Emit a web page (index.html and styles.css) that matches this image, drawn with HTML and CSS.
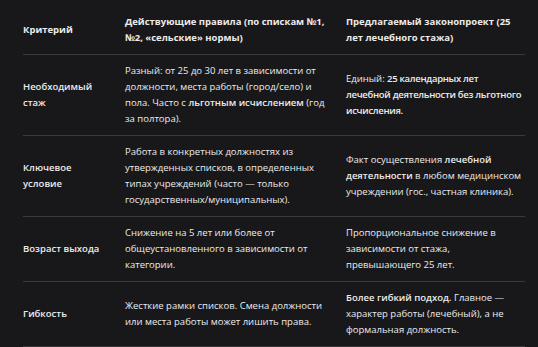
FILE: index.html
```html
<!DOCTYPE html>
<html lang="ru">
<head>
<meta charset="utf-8">
<link rel="stylesheet" href="styles.css">
</head>
<body>
<table class="cmp">
  <colgroup>
    <col class="c1"><col class="c2"><col class="c3">
  </colgroup>
  <thead>
    <tr>
      <th>Критерий</th>
      <th>Действующие правила (по спискам №1, №2, «сельские» нормы)</th>
      <th>Предлагаемый законопроект (25 лет лечебного стажа)</th>
    </tr>
  </thead>
  <tbody>
    <tr>
      <td class="crit">Необходимый стаж</td>
      <td>Разный: от 25 до 30 лет в зависимости от должности, места работы (город/село) и пола. Часто с <b>льготным исчислением</b> (год за полтора).</td>
      <td>Единый: <b class="tight">25 календарных лет<br>лечебной деятельности без льготного исчисления.</b></td>
    </tr>
    <tr>
      <td class="crit">Ключевое условие</td>
      <td>Работа в конкретных должностях из утвержденных списков, в определенных типах учреждений (часто — только государственных/муниципальных).</td>
      <td>Факт осуществления <b>лечебной деятельности</b> в любом медицинском учреждении (гос., частная клиника).</td>
    </tr>
    <tr>
      <td class="crit">Возраст выхода</td>
      <td>Снижение на 5 лет или более от общеустановленного в зависимости от категории.</td>
      <td>Пропорциональное снижение в зависимости от стажа, превышающего 25 лет.</td>
    </tr>
    <tr>
      <td class="crit">Гибкость</td>
      <td>Жесткие рамки списков. Смена должности или места работы может лишить права.</td>
      <td><b>Более гибкий подход.</b> Главное — характер работы (лечебный), а не формальная должность.</td>
    </tr>
  </tbody>
</table>
</body>
</html>
```

FILE: styles.css
```css
html, body {
  margin: 0;
  background: #18181b;
}
body {
  padding: 6px 12px 0 23px;
  font-family: "Open Sans", "Noto Sans", sans-serif;
  font-size: 9.5px;
  line-height: 16px;
  color: #ececec;
}
.cmp {
  width: 502px;
  border-collapse: collapse;
  table-layout: fixed;
}
.c1 { width: 102px; }
.c2 { width: 221px; }
.c3 { width: 179px; }
.cmp th, .cmp td {
  padding: 8px 13px 8px 0;
  text-align: left;
  vertical-align: middle;
  border-bottom: 1px solid #3a3a3d;
}
.cmp td.crit, .cmp th:first-child {
  padding-right: 18px;
}
.cmp th:last-child, .cmp td:last-child {
  padding-right: 0;
}
.cmp th {
  font-weight: 700;
}
.cmp td.crit {
  font-weight: 600;
}
.cmp b {
  font-weight: 600;
}
.cmp b.tight {
  letter-spacing: -0.3px;
}
```
